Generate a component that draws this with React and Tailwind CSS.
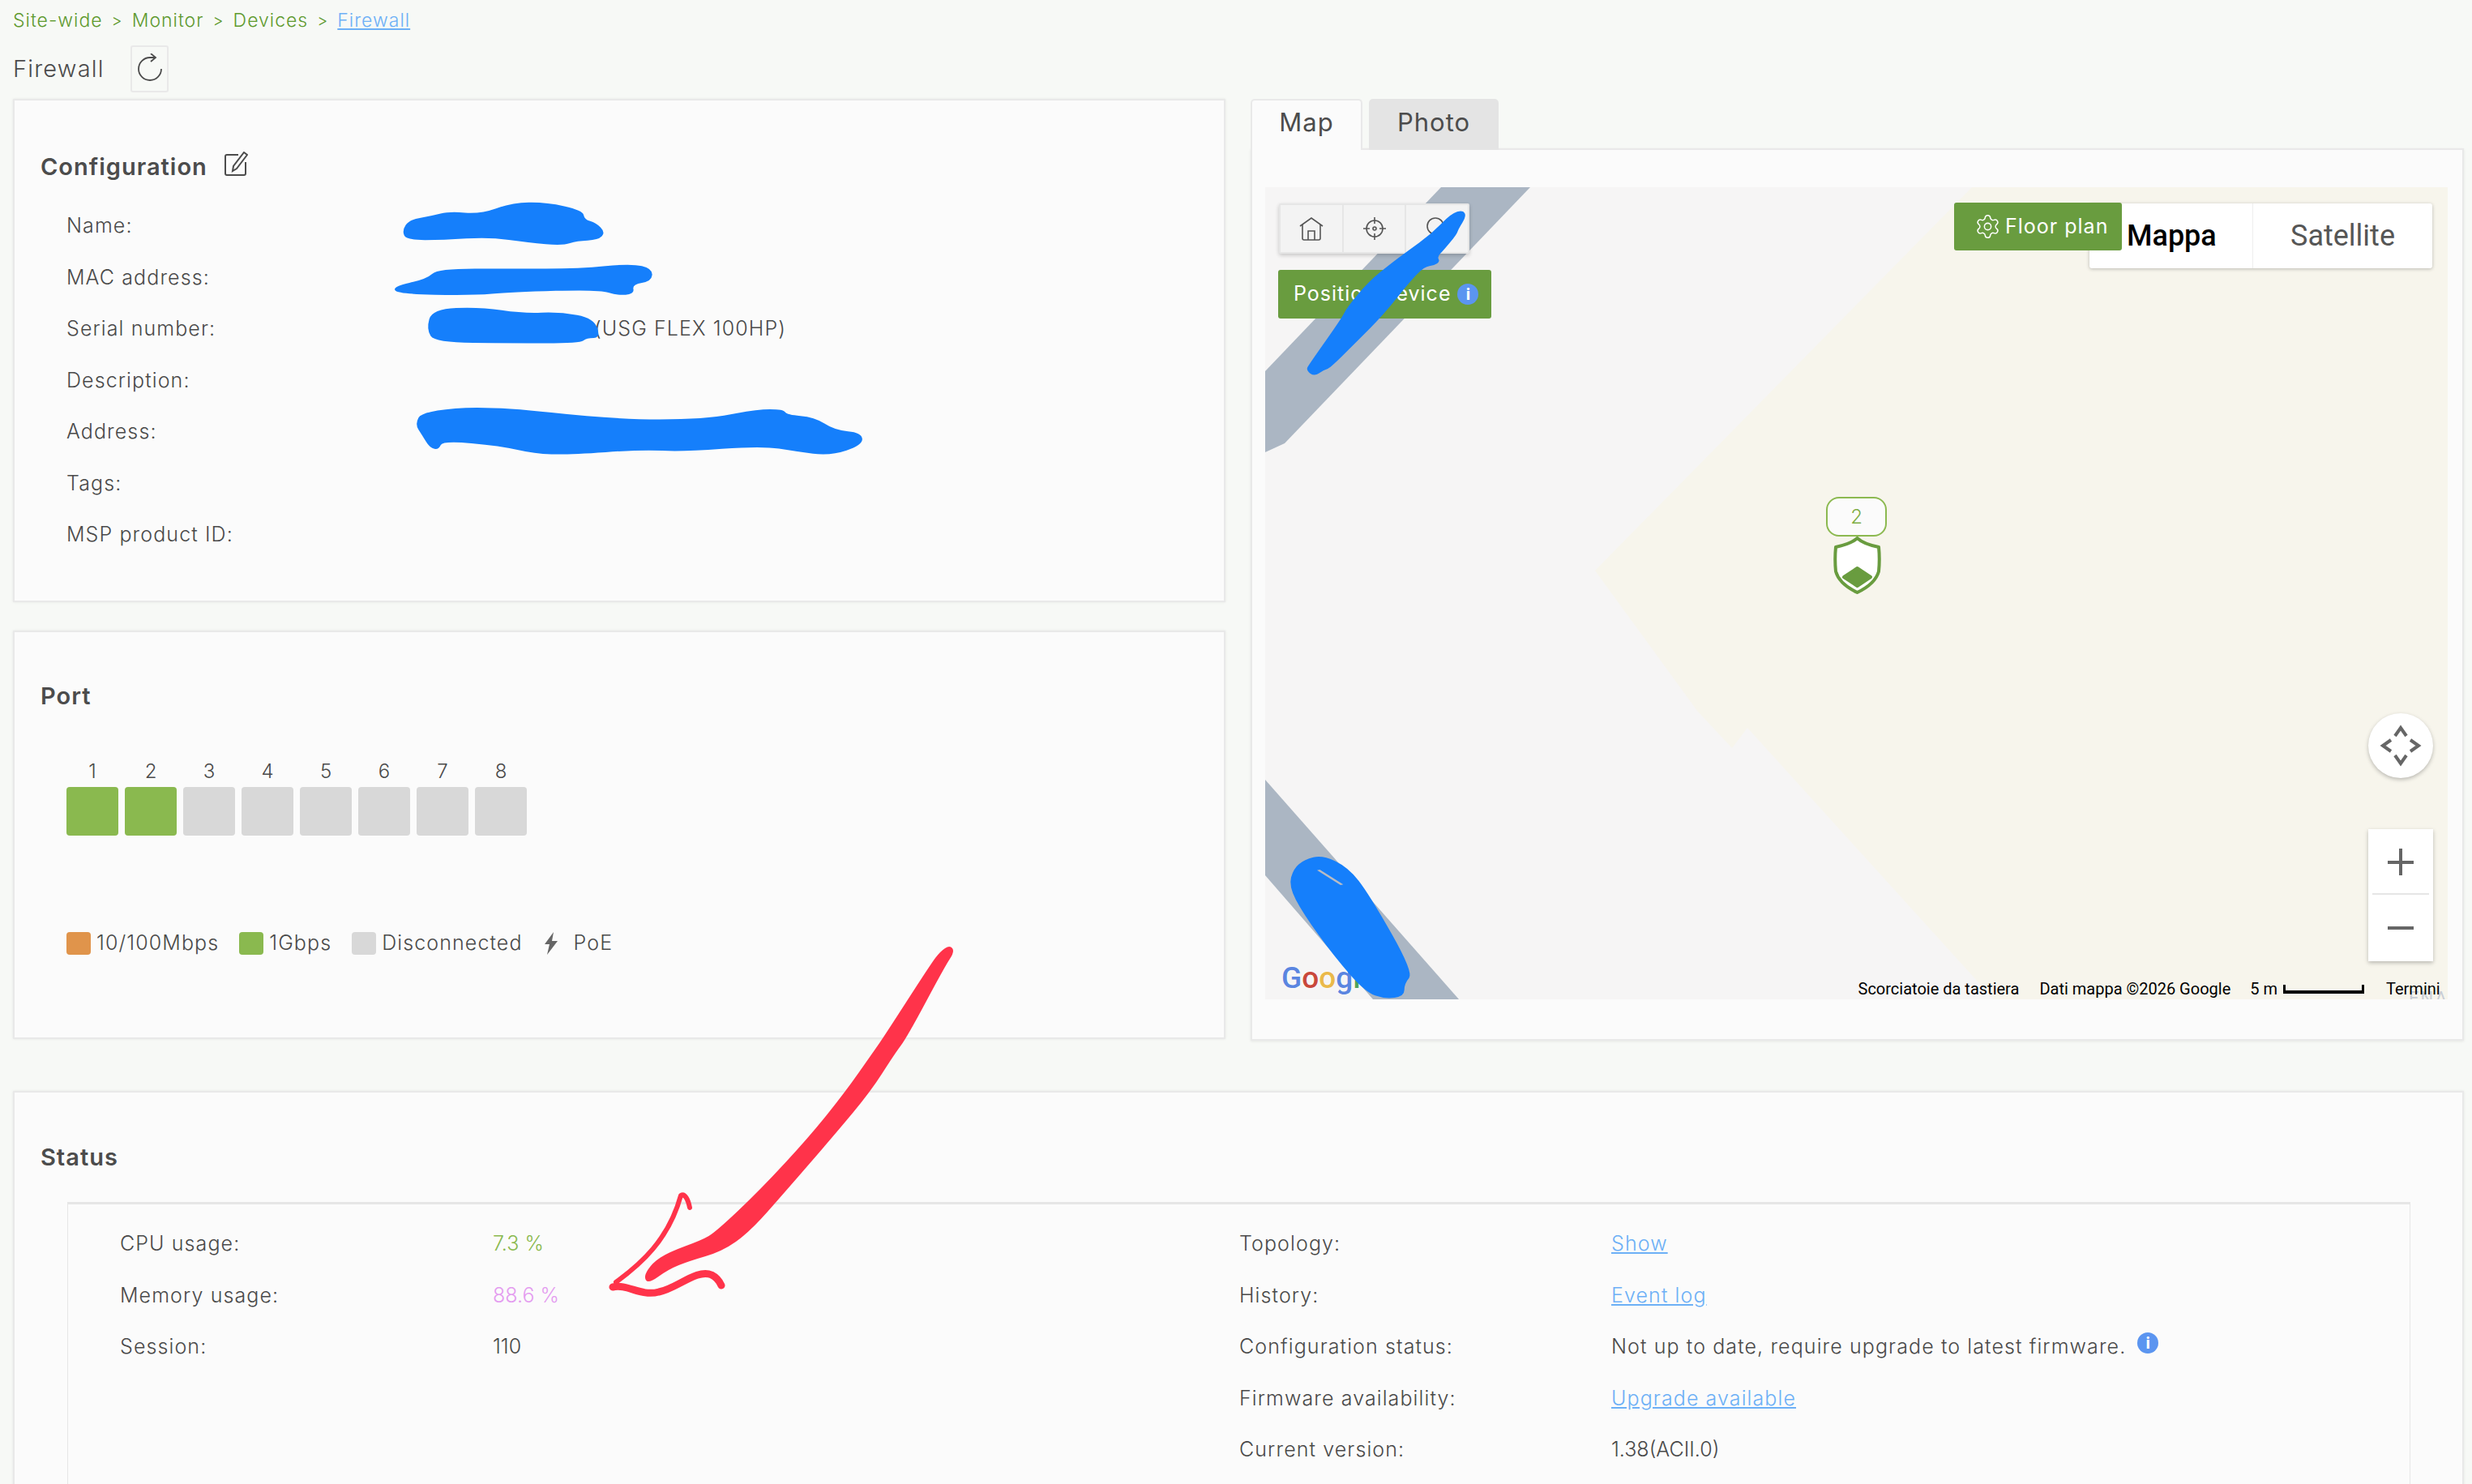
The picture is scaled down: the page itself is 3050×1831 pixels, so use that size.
import { Settings } from "lucide-react";

const font = { fontFamily: "Inter, 'Open Sans', sans-serif" };

const configRows = [
  ["Name:", null],
  ["MAC address:", null],
  ["Serial number:", "(USG FLEX 100HP)"],
  ["Description:", null],
  ["Address:", null],
  ["Tags:", null],
  ["MSP product ID:", null],
];

const ports = [1, 2, 3, 4, 5, 6, 7, 8];

// closed outline through the midpoints, so the marker strokes have no corners
function smooth(points) {
  const mid = (a, b) => [(a[0] + b[0]) / 2, (a[1] + b[1]) / 2];
  const start = mid(points[points.length - 1], points[0]);
  let d = `M${start[0]} ${start[1]}`;
  points.forEach((p, i) => {
    const m = mid(p, points[(i + 1) % points.length]);
    d += `Q${p[0]} ${p[1]} ${m[0]} ${m[1]}`;
  });
  return d + "Z";
}

const marks = {
  name: [[707,620],[720,590],[760,580],[790,568],[845,575],[900,545],[960,543],[1025,565],[1028,590],[1048,598],[1065,625],[1052,645],[1015,647],[990,660],[930,652],[860,637],[780,645],[715,645]],
  mac: [[690,770],[750,750],[770,722],[900,722],[1020,722],[1110,708],[1148,722],[1146,756],[1112,764],[1116,790],[1085,794],[1055,778],[900,785],[830,794],[700,790]],
  serial: [[750,885],[760,830],[845,825],[920,842],[985,838],[1045,855],[1056,908],[1032,908],[1020,922],[900,922],[765,920]],
  address: [[730,1140],[742,1105],[860,1090],[1080,1127],[1240,1127],[1330,1100],[1378,1100],[1384,1115],[1432,1120],[1468,1156],[1515,1162],[1518,1195],[1460,1225],[1400,1213],[1340,1198],[1200,1214],[1130,1208],[1000,1222],[940,1219],[880,1198],[778,1184],[772,1208],[756,1204],[742,1168]],
  map: [[795,478],[808,500],[778,548],[772,568],[722,628],[700,650],[710,668],[690,682],[652,688],[602,738],[502,864],[402,964],[302,1064],[280,1069],[245,1094],[214,1070],[226,1048],[346,878],[366,838],[446,742],[528,676],[588,631],[678,566],[752,490]],
  bottom: [[95,585],[128,630],[155,730],[212,1020],[200,1060],[200,1108],[175,1118],[150,1092],[110,960],[70,800],[52,700],[58,635],[72,602]],
  arrow: [[1172,1166],[1178,1174],[1166,1192],[1119,1280],[1104,1300],[1074,1347],[1028,1402],[970,1469],[925,1520],[891,1544],[850,1556],[825,1566],[800,1584],[794,1575],[805,1558],[825,1545],[866,1530],[883,1520],[937,1469],[999,1402],[1043,1347],[1076,1300],[1090,1280],[1148,1190],[1160,1174]],
};

function InfoDot() {
  return (
    <span className="flex h-[26px] w-[26px] items-center justify-center rounded-full bg-[#5b95f0] text-[20px] font-bold leading-none tracking-normal text-white">
      i
    </span>
  );
}

function Card({ children }) {
  return (
    <div className="border-2 border-[#e9e9e9] bg-[#fbfbfb] pl-[32px] shadow-[0_0_3px_rgba(0,0,0,0.08)]">
      {children}
    </div>
  );
}

function Title({ children }) {
  return <h2 className="flex h-[44px] items-center text-[29px] font-semibold leading-none tracking-[1px] text-[#4c4c4c]">{children}</h2>;
}

function Row({ label, labelWidth, children }) {
  return (
    <div className="flex h-[63.5px] items-center text-[25px] font-light tracking-[1.1px] text-[#4a4a4a]">
      <span style={{ width: labelWidth }} className="shrink-0">{label}</span>
      {children}
    </div>
  );
}

function Link({ children }) {
  return <a className="text-[#6db0f6] underline underline-offset-2">{children}</a>;
}

function Configuration() {
  return (
    <Card>
      <div className="h-[617px] pt-[59px]">
        <Title>
          Configuration
          <svg className="ml-[21px] mt-[-6px]" width="29" height="30" viewBox="0 0 29 30" fill="none" stroke="#4c4c4c" strokeWidth="2">
            <path d="M17 4H3a2 2 0 0 0-2 2v21a2 2 0 0 0 2 2h21a2 2 0 0 0 2-2V13" />
            <path d="M24 1l4 3-13 17-5 3 1-6z" />
          </svg>
        </Title>
        <div className="ml-[32px] mt-[20px]">
          {configRows.map(([label, value]) => (
            <Row key={label} label={label} labelWidth="448px">
              {value && <span className="ml-[203px]">{value}</span>}
            </Row>
          ))}
        </div>
      </div>
    </Card>
  );
}

function LegendItem({ color, label, className }) {
  return (
    <div className={`flex items-center ${className}`}>
      <span className={`h-[28px] w-[30px] rounded-[4px] ${color}`} />
      <span className="ml-[7px]">{label}</span>
    </div>
  );
}

function Port() {
  return (
    <Card>
      <div className="h-[500px] pt-[56px]">
        <Title>Port</Title>
        <div className="ml-[32px] mt-[50px] flex gap-[8px]">
          {ports.map((p) => (
            <div key={p} className="w-[64px]">
              <div className="h-[41px] text-center text-[24px] font-light leading-[44px] text-[#4a4a4a]">{p}</div>
              <div className={`h-[60px] rounded-[4px] ${p < 3 ? "bg-[#8ab94f]" : "bg-[#d8d8d8]"}`} />
            </div>
          ))}
        </div>
        <div className="ml-[32px] mt-[119px] flex h-[28px] items-center text-[25px] font-light tracking-[1.1px] text-[#4a4a4a]">
          <LegendItem color="bg-[#e0944b]" label="10/100Mbps" />
          <LegendItem color="bg-[#8ab94f]" label="1Gbps" className="ml-[25px]" />
          <LegendItem color="bg-[#d8d8d8]" label="Disconnected" className="ml-[25px]" />
          <svg className="ml-[26px]" width="18" height="28" viewBox="0 0 18 28" fill="#666">
            <path d="M12 0L1 15h6l-3 13 13-17h-7z" />
          </svg>
          <span className="ml-[19px]">PoE</span>
        </div>
      </div>
    </Card>
  );
}

function MapToolbar() {
  return (
    <div className="absolute left-[17px] top-[20px] flex h-[62px] w-[235px] rounded-[2px] border-2 border-[#e6e6e6] bg-[#f3f3f3] shadow-[0_2px_5px_rgba(0,0,0,0.2)]">
      <div className="flex flex-1 items-center justify-center border-r-2 border-[#e6e6e6]">
        <svg width="30" height="30" viewBox="0 0 30 30" fill="none" stroke="#555" strokeWidth="1.6">
          <path d="M1 12L15 2l14 10" />
          <path d="M4 10v17a2 2 0 0 0 2 2h18a2 2 0 0 0 2-2V10" />
          <path d="M11 29V18h8v11" />
        </svg>
      </div>
      <div className="flex flex-1 items-center justify-center border-r-2 border-[#e6e6e6]">
        <svg width="30" height="30" viewBox="0 0 30 30" fill="none" stroke="#555" strokeWidth="1.6">
          <circle cx="15" cy="15" r="10" />
          <circle cx="15" cy="15" r="2" />
          <path d="M15 1v8M15 21v8M1 15h8M21 15h8" />
        </svg>
      </div>
      <div className="flex flex-1 items-center justify-center">
        <svg width="30" height="30" viewBox="0 0 30 30" fill="none" stroke="#555" strokeWidth="1.6">
          <circle cx="13" cy="12" r="10" />
          <path d="M20 19l8 8" />
        </svg>
      </div>
    </div>
  );
}

function MapPanel() {
  return (
    <div className="relative h-[1002px] overflow-hidden bg-[#f6f5f5]">
      {/* map tiles */}
      <svg className="absolute inset-0" width="1459" height="1002" viewBox="0 0 1459 1002">
        <polygon fill="#f7f5ec" points="872,0 1459,0 1459,1002 899,1002 595,667 576,692 533,646 407,473" />
        <polygon fill="#abb6c3" points="217,0 327,0 24,316 0,327 0,227" />
        <polygon fill="#abb6c3" points="0,731 239,1002 133,1002 0,849" />
        <text x="1411" y="1008" fontSize="22" letterSpacing="2" fill="#c9ced6" fontFamily="Roboto, sans-serif">ENA</text>
      </svg>

      <MapToolbar />

      <div className="absolute left-[16px] top-[102px] flex h-[60px] w-[263px] items-center rounded-[3px] bg-[#699c3f] pl-[19px] text-[25px] tracking-[1px] text-white">
        Position device
        <span className="ml-[8px]"><InfoDot /></span>
      </div>

      <div className="absolute left-[1017px] top-[20px] flex h-[80px] w-[423px] overflow-hidden rounded-[3px] bg-white text-[36px] shadow-[0_1px_4px_rgba(0,0,0,0.25)]" style={{ fontFamily: "Roboto, sans-serif" }}>
        <div className="flex w-[202px] items-center border-r border-[#eee] pl-[46px] font-medium text-black">Mappa</div>
        <div className="flex flex-1 items-center justify-center text-[#565656]">Satellite</div>
      </div>

      <div className="absolute left-[850px] top-[19px] flex h-[59px] w-[207px] items-center rounded-[3px] bg-[#699c3f] pl-[25px] text-[25px] tracking-[1px] text-white">
        <Settings size={33} strokeWidth={1.1} />
        <span className="ml-[5px]">Floor plan</span>
      </div>

      {/* device marker */}
      <div className="absolute left-[692px] top-[382px] flex h-[49px] w-[75px] items-center justify-center rounded-[16px] border-2 border-[#8cb950] bg-[#fbfbfb] text-[24px] font-light text-[#7fae45]">
        2
      </div>
      <svg className="absolute left-[700px] top-[431px]" width="61" height="71" viewBox="0 0 61 71">
        <path d="M30.5 2C24 8 14 11 4 13c-1 10-1 20 0 30 3 11 14 20 26.5 26C43 63 54 54 57 43c1-10 1-20 0-30C47 11 37 8 30.5 2z" fill="#fff" stroke="#699c3f" strokeWidth="4" strokeLinejoin="round" />
        <path d="M30.5 39L47 50 30.5 61 14 50z" fill="#699c3f" stroke="#699c3f" strokeWidth="4" strokeLinejoin="round" />
      </svg>

      {/* pan */}
      <div className="absolute left-[1361px] top-[649px] h-[80px] w-[80px] rounded-full bg-white shadow-[0_2px_5px_rgba(0,0,0,0.25)]">
        <svg width="80" height="80" viewBox="0 0 80 80" fill="none" stroke="#666" strokeWidth="4">
          <path d="M33 28l7-10 7 10M33 52l7 10 7-10M28 33l-10 7 10 7M52 33l10 7-10 7" />
        </svg>
      </div>

      {/* zoom */}
      <div className="absolute left-[1361px] top-[792px] flex h-[163px] w-[80px] flex-col items-center bg-white shadow-[0_2px_5px_rgba(0,0,0,0.25)]">
        <div className="relative h-[81px] w-[70px] border-b-2 border-[#e6e6e6]">
          <span className="absolute left-[19px] top-[39px] h-[4px] w-[32px] bg-[#666]" />
          <span className="absolute left-[33px] top-[24px] h-[33px] w-[4px] bg-[#666]" />
        </div>
        <span className="mt-[39px] h-[4px] w-[32px] bg-[#666]" />
      </div>

      {/* google logo */}
      <div className="absolute left-[20px] top-[952px] flex text-[37px] font-medium leading-[48px] [text-shadow:0_0_2px_white]" style={{ fontFamily: "Roboto, sans-serif" }}>
        <span className="text-[#5b85e0]">G</span>
        <span className="text-[#c9483b]">o</span>
        <span className="text-[#eab94a]">o</span>
        <span className="text-[#5b85e0]">g</span>
        <span className="text-[#4fa35a]">l</span>
        <span className="text-[#c9483b]">e</span>
      </div>

      {/* attribution */}
      <div className="absolute bottom-0 right-0 flex h-[26px] items-center text-[20px] leading-none text-black" style={{ fontFamily: "Roboto, sans-serif" }}>
        <span className="px-[9px]">Scorciatoie da tastiera</span>
        <span className="ml-[7px] px-[9px]">Dati mappa ©2026 Google</span>
        <span className="ml-[6px] pl-[9px] pr-[5px]">5 m</span>
        <span className="ml-[2px] h-[11px] w-[100px] border-x-[3px] border-b-[4px] border-black" />
        <span className="ml-[27px] w-[76px]">Termini</span>
      </div>
    </div>
  );
}

function MapCard() {
  return (
    <div>
      <div className="relative z-10 -mb-[2px] flex h-[63px] items-end gap-[8px] text-[31px] tracking-[1px] text-[#4c4c4c]">
        <div className="flex h-[63px] w-[138px] items-center justify-center rounded-t-[5px] border-2 border-b-0 border-[#e9e9e9] bg-[#fbfbfb] pb-[6px]">Map</div>
        <div className="flex h-[63px] w-[160px] items-center justify-center rounded-t-[5px] bg-[#e4e4e4] pb-[4px]">Photo</div>
      </div>
      <div className="h-[1101px] border-2 border-[#e9e9e9] bg-[#fbfbfb] pl-[16px] pr-[18px] pt-[46px] shadow-[0_1px_3px_rgba(0,0,0,0.08)]">
        <MapPanel />
      </div>
    </div>
  );
}

function Status() {
  return (
    <div className="mt-[62px]">
      <Card>
        <div className="h-[600px] pr-[64px] pt-[57px]">
          <Title>Status</Title>
          <div className="ml-[33px] mt-[34px] flex h-[500px] border-x border-t-[3px] border-[#e6e6e6] pt-[17px]">
            <div className="w-[1445px] pl-[64px]">
              <Row label="CPU usage:" labelWidth="460px"><span className="tracking-normal text-[#8ab94f]">7.3 %</span></Row>
              <Row label="Memory usage:" labelWidth="460px"><span className="tracking-normal text-[#e49cf0]">88.6 %</span></Row>
              <Row label="Session:" labelWidth="460px"><span className="tracking-normal">110</span></Row>
            </div>
            <div className="flex-1">
              <Row label="Topology:" labelWidth="459px"><Link>Show</Link></Row>
              <Row label="History:" labelWidth="459px"><Link>Event log</Link></Row>
              <Row label="Configuration status:" labelWidth="459px">
                <span>Not up to date, require upgrade to latest firmware.</span>
                <span className="ml-[14px] mt-[-10px]"><InfoDot /></span>
              </Row>
              <Row label="Firmware availability:" labelWidth="459px"><Link>Upgrade available</Link></Row>
              <Row label="Current version:" labelWidth="459px"><span className="tracking-normal">1.38(ACII.0)</span></Row>
            </div>
          </div>
        </div>
      </Card>
    </div>
  );
}

// hand drawn redaction marks and the red arrow on top of the screenshot
function Annotations() {
  return (
    <svg className="pointer-events-none absolute left-0 top-0 z-20" width="3050" height="1831" viewBox="0 0 3050 1831">
      <g transform="scale(0.7015 0.4592)" fill="#157ffb">
        <path d={smooth(marks.name)} />
        <path d={smooth(marks.mac)} />
        <path d={smooth(marks.serial)} />
        <path d={smooth(marks.address)} />
      </g>
      <path transform="translate(1540 100) scale(0.3333)" fill="#157ffb" d={smooth(marks.map)} />
      <g transform="translate(1540 860) scale(0.9636 0.3333)">
        <path fill="#157ffb" d={smooth(marks.bottom)} />
        <path d="M90 640L120 695" fill="none" stroke="#b8bcc4" strokeWidth="4" />
      </g>
      <g stroke="#ff334a" fill="none" strokeLinejoin="round" strokeLinecap="round">
        <path fill="#ff334a" stroke="none" d={smooth(marks.arrow)} />
        <path strokeWidth="6" d="M851 1490C849 1480 845 1472 840 1475C825 1530 790 1560 760 1582" />
        <path strokeWidth="9" d="M756 1588C775 1584 790 1600 813 1594C835 1590 860 1565 878 1573C886 1577 888 1582 890 1586" />
      </g>
    </svg>
  );
}

export default function App() {
  return (
    <div className="relative h-[1831px] w-[3050px] overflow-hidden bg-[#f7f9f6] pl-[16px] pr-[10px] text-[#4a4a4a]" style={font}>
      <nav className="flex h-[50px] items-center text-[23px] font-light tracking-[1px] text-[#5f9a2f]">
        <span>Site-wide</span>
        <span className="mx-[11px] text-[20px]">&gt;</span>
        <span>Monitor</span>
        <span className="mx-[11px] text-[20px]">&gt;</span>
        <span>Devices</span>
        <span className="mx-[11px] text-[20px]">&gt;</span>
        <Link>Firewall</Link>
      </nav>
      <div className="flex h-[72px] items-center pb-[2px] text-[29px] font-light tracking-[1.2px] text-[#4c4c4c]">
        <span className="w-[145px]">Firewall</span>
        <button className="flex h-[58px] w-[47px] items-center justify-center rounded-[3px] border-2 border-[#e9e9e9]">
          <svg width="34" height="38" viewBox="0 0 34 38" fill="none" stroke="#4c4c4c" strokeWidth="1.8">
            <path d="M31 19a14 14 0 1 1-14-14h6" />
            <path d="M18 0l6 5-6 5" />
          </svg>
        </button>
      </div>
      <div className="flex gap-[31px]">
        <div className="flex w-[1496px] shrink-0 flex-col gap-[35px]">
          <Configuration />
          <Port />
        </div>
        <div className="w-[1497px] shrink-0">
          <MapCard />
        </div>
      </div>
      <Status />
      <Annotations />
    </div>
  );
}
